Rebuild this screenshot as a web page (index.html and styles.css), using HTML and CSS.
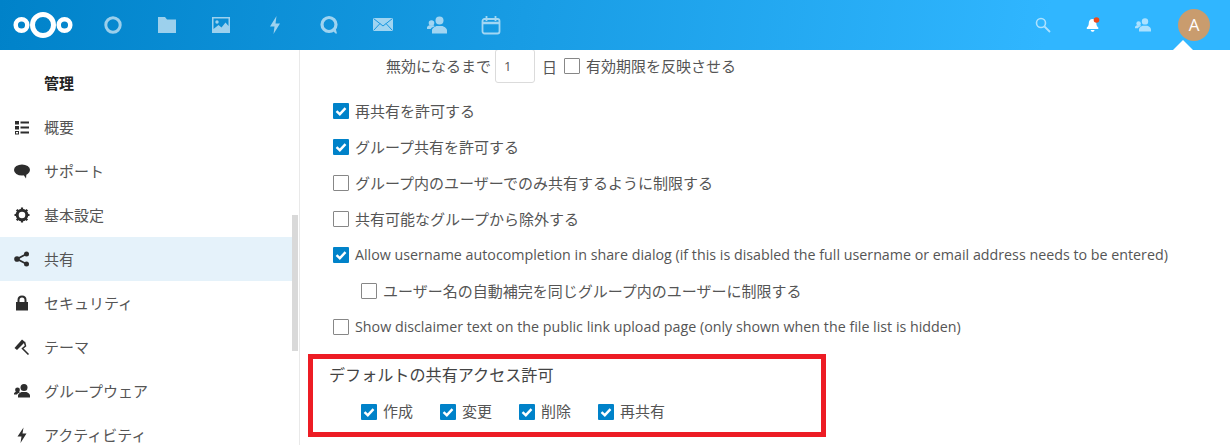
FILE: index.html
```html
<!DOCTYPE html>
<html lang="ja">
<head>
  <meta charset="UTF-8">
  <title>管理 - 共有</title>
  <link rel="stylesheet" href="styles.css">
</head>
<body>

  <svg class="defs" width="0" height="0">
    <symbol id="check" viewBox="0 0 16 16">
      <path d="M3.5 8.200 L6.800 11.200 L12.500 5.200" fill="none" stroke="#fff" stroke-width="2.400"/>
    </symbol>
  </svg>

  <header class="topbar">
    <svg class="logo" width="60" height="28" viewBox="0 0 60 28">
      <circle cx="30" cy="14" r="10.500" fill="none" stroke="#fff" stroke-width="5"/>
      <circle cx="8.500" cy="14" r="5.800" fill="none" stroke="#fff" stroke-width="4.500"/>
      <circle cx="51.500" cy="14" r="5.800" fill="none" stroke="#fff" stroke-width="4.500"/>
    </svg>
    <nav class="apps">
      <svg width="20" height="20" viewBox="0 0 20 20"><circle cx="10" cy="10" r="7.200" fill="none" stroke="#fff" stroke-width="3"/></svg>
      <svg width="20" height="20" viewBox="0 0 20 20"><path d="M1 2h7l2 2.500h9V18H1z" fill="#fff"/></svg>
      <svg width="20" height="20" viewBox="0 0 20 20"><path fill-rule="evenodd" d="M1 2h18v16H1zM2.500 3.500v10.500l5-4 3 2.500 4-5 3 3.500V3.500z" fill="#fff"/><circle cx="6" cy="7" r="1.700" fill="#fff"/></svg>
      <svg width="20" height="20" viewBox="0 0 20 20"><path d="M11.500 1 L5 11.500h4.500L8.500 19l6.500-10.500h-4.500z" fill="#fff"/></svg>
      <svg width="20" height="20" viewBox="0 0 20 20"><circle cx="10" cy="9.500" r="7" fill="none" stroke="#fff" stroke-width="3.200"/><path d="M13 15l3.500 3.500h1.500L16.500 13z" fill="#fff"/></svg>
      <svg width="20" height="20" viewBox="0 0 20 20"><path d="M0 3h20v13H0z" fill="#fff"/><path d="M0.500 3.500L10 11l9.500-7.500M0.500 15.500L7 8.500M19.500 15.500L13 8.500" fill="none" stroke="#1a97e3" stroke-width="1"/></svg>
      <svg width="20" height="20" viewBox="0 0 20 20"><circle cx="12.500" cy="5.500" r="4" fill="#fff"/><circle cx="4.500" cy="8" r="2.800" fill="#fff"/><path d="M5 18.500v-3c0-2.500 3-3.800 4.500-4.500h6c1.500.7 4.500 2 4.500 4.500v3zM0 14v-1.500c0-1.200 1.700-2 2.500-2.300h4c.5.3 1 .6 1.300 1C5.500 12 4 13 3.700 14z" fill="#fff"/></svg>
      <svg width="20" height="20" viewBox="0 0 20 20"><rect x="1.500" y="4" width="17" height="14.500" rx="2" fill="none" stroke="#fff" stroke-width="1.800"/><path d="M1.500 8h17" stroke="#fff" stroke-width="2.500"/><path d="M5.500 1v5M14.500 1v5" stroke="#fff" stroke-width="1.800"/></svg>
    </nav>
    <div class="tools">
      <svg class="tool" width="16" height="16" viewBox="0 0 16 16"><circle cx="6" cy="6" r="4.500" fill="none" stroke="#fff" stroke-width="1.600"/><path d="M9.500 9.500L15 15" stroke="#fff" stroke-width="1.800"/></svg>
      <svg class="bell" width="14" height="16" viewBox="0 0 14 16"><path d="M6.500 2c-2.500 0-3.700 2-3.700 4 0 2.500-.8 3.500-2 4.500V12h11.500v-1.500c-1.200-1-2-2-2-4.500s-1.300-4-3.800-4z" fill="#fff"/><path d="M4.700 13h3.800c0 1-1 1.800-1.900 1.800S4.700 14 4.700 13z" fill="#fff"/><circle cx="10.500" cy="3" r="2.800" fill="#ee4a1c"/></svg>
      <svg class="tool" width="16" height="16" viewBox="0 0 20 20"><circle cx="12.500" cy="5.500" r="4" fill="#fff"/><circle cx="4.500" cy="8" r="2.800" fill="#fff"/><path d="M5 18v-2.500c0-2.500 3-3.800 4.500-4.500h6c1.500.7 4.500 2 4.500 4.500V18zM0 14v-1.500c0-1.200 1.700-2 2.500-2.300h4c.5.3 1 .6 1.300 1C5.500 12 4 13 3.700 14z" fill="#fff"/></svg>
      <div class="avatar">A</div>
    </div>
    <span class="menu-tip"></span>
  </header>

  <div class="page">
    <aside class="sidebar">
      <div class="side-list">
        <div class="side-title">管理</div>
        <a class="side-item">
          <svg width="16" height="16" viewBox="0 0 16 16"><path d="M1 2h4v3.500H1zM1 7h4v3.500H1zM6.500 2.500H15v2H6.500zM6.500 7.500H15v2H6.500zM6.500 12.500H15v2H6.500z" fill="#2d2d2d"/><rect x="1.500" y="12.500" width="3" height="2.500" fill="none" stroke="#2d2d2d"/></svg>
          <span>概要</span>
        </a>
        <a class="side-item">
          <svg width="16" height="16" viewBox="0 0 16 16"><ellipse cx="8" cy="7" rx="8" ry="5.500" fill="#2d2d2d"/><path d="M9 11l3 4.500.5-5.500z" fill="#2d2d2d"/></svg>
          <span>サポート</span>
        </a>
        <a class="side-item">
          <svg width="16" height="16" viewBox="0 0 16 16"><circle cx="8" cy="8" r="4.800" fill="none" stroke="#2d2d2d" stroke-width="3"/><path d="M8 0.500v15M.5 8h15M2.700 2.700l10.600 10.600M13.300 2.700L2.700 13.300" stroke="#2d2d2d" stroke-width="2.200" stroke-dasharray="3 9 3"/></svg>
          <span>基本設定</span>
        </a>
        <a class="side-item active">
          <svg width="16" height="16" viewBox="0 0 16 16"><circle cx="3" cy="8" r="2.800" fill="#2d2d2d"/><circle cx="12.500" cy="3" r="2.500" fill="#2d2d2d"/><circle cx="12.500" cy="13" r="2.500" fill="#2d2d2d"/><path d="M12.500 3L3 8l9.500 5" fill="none" stroke="#2d2d2d" stroke-width="1.800"/></svg>
          <span>共有</span>
        </a>
        <a class="side-item">
          <svg width="16" height="16" viewBox="0 0 16 16"><path d="M2 7h12v8.500H2z" fill="#2d2d2d"/><path d="M4.500 7.500V5c0-2 1.500-3.500 3.500-3.500s3.500 1.500 3.500 3.500v2.500" fill="none" stroke="#2d2d2d" stroke-width="2"/></svg>
          <span>セキュリティ</span>
        </a>
        <a class="side-item">
          <svg width="16" height="16" viewBox="0 0 16 16"><path d="M0.500 9L8 0.500l3 2.500L3 11z" fill="#2d2d2d"/><path d="M10.500 3l1 4-3 2.500 6 6" fill="none" stroke="#2d2d2d" stroke-width="1.500"/></svg>
          <span>テーマ</span>
        </a>
        <a class="side-item">
          <svg width="16" height="16" viewBox="0 0 16 16"><circle cx="10" cy="4.500" r="3.500" fill="#2d2d2d"/><circle cx="3.500" cy="7" r="2.400" fill="#2d2d2d"/><path d="M4 14.500v-2c0-2 2.500-3 3.500-3.500h5c1 .5 3.500 1.500 3.500 3.500v2zM0 11.500v-1c0-1 1.300-1.500 2-1.800h3c.3.200.6.400.9.700C4.200 10 3.200 10.700 3 11.500z" fill="#2d2d2d"/></svg>
          <span>グループウェア</span>
        </a>
        <a class="side-item">
          <svg width="16" height="16" viewBox="0 0 16 16"><path d="M9.500 0.500L3.500 9.500h4l-1 6.500 6-9.500h-4z" fill="#2d2d2d"/></svg>
          <span>アクティビティ</span>
        </a>
      </div>
      <div class="scroll-track"><div class="scroll-thumb"></div></div>
    </aside>

    <main class="content">
      <div class="row expire">
        <span class="txt">無効になるまで</span>
        <input class="days" type="text" value="1">
        <span class="txt day-unit">日</span>
        <span class="box"></span>
        <span class="txt">有効期限を反映させる</span>
      </div>

      <div class="row"><svg class="box on"><use href="#check"/></svg><span class="txt">再共有を許可する</span></div>
      <div class="row"><svg class="box on"><use href="#check"/></svg><span class="txt">グループ共有を許可する</span></div>
      <div class="row"><span class="box"></span><span class="txt">グループ内のユーザーでのみ共有するように制限する</span></div>
      <div class="row"><span class="box"></span><span class="txt">共有可能なグループから除外する</span></div>
      <div class="row"><svg class="box on"><use href="#check"/></svg><span class="txt latin">Allow username autocompletion in share dialog (if this is disabled the full username or email address needs to be entered)</span></div>
      <div class="row sub"><span class="box"></span><span class="txt">ユーザー名の自動補完を同じグループ内のユーザーに制限する</span></div>
      <div class="row"><span class="box"></span><span class="txt latin">Show disclaimer text on the public link upload page (only shown when the file list is hidden)</span></div>

      <section class="perm-box">
        <h3 class="perm-title">デフォルトの共有アクセス許可</h3>
        <div class="perm-list">
          <span class="perm"><svg class="box on"><use href="#check"/></svg><span class="txt">作成</span></span>
          <span class="perm"><svg class="box on"><use href="#check"/></svg><span class="txt">変更</span></span>
          <span class="perm"><svg class="box on"><use href="#check"/></svg><span class="txt">削除</span></span>
          <span class="perm"><svg class="box on"><use href="#check"/></svg><span class="txt">再共有</span></span>
        </div>
      </section>
    </main>
  </div>

</body>
</html>
```

FILE: styles.css
```css
* {
  box-sizing: border-box;
}

html, body {
  margin: 0;
  height: 445px;
  overflow: hidden;
}

body {
  font-family: "Open Sans", "Noto Sans CJK JP", "Liberation Sans", sans-serif;
  font-size: 15px;
  color: #555;
  background-color: #fff;
}

.defs {
  position: absolute;
}

/* top bar */
.topbar {
  position: relative;
  display: flex;
  align-items: center;
  height: 50px;
  padding-left: 13px;
  background: linear-gradient(100deg, #0082c9 0%, #30b6ff 85%);
}

.apps {
  display: flex;
  gap: 34px;
  margin-left: 30px;
  opacity: 0.6;
}

.tools {
  display: flex;
  align-items: center;
  margin-left: auto;
  margin-right: 20px;
}

.tool {
  opacity: 0.6;
}

.bell {
  margin: 0 35px 0 35px;
}

.avatar {
  width: 32px;
  height: 32px;
  margin-left: 27px;
  border-radius: 50%;
  background-color: #c99c6e;
  color: #fff;
  font-size: 17px;
  line-height: 32px;
  text-align: center;
}

.menu-tip {
  position: absolute;
  right: 37px;
  bottom: 0;
  border: 10px solid transparent;
  border-top: 0;
  border-bottom-color: #fff;
}

/* sidebar */
.page {
  display: flex;
  height: 395px;
}

.sidebar {
  display: flex;
  flex: 0 0 300px;
  height: 100%;
  border-right: 1px solid #e9e9e9;
}

.side-list {
  flex: 0 0 292px;
  padding-top: 11px;
}

.side-title {
  height: 44px;
  padding-left: 44px;
  font-weight: bold;
  line-height: 44px;
  color: #222;
}

.side-item {
  display: flex;
  align-items: center;
  gap: 14px;
  height: 44px;
  padding-left: 14px;
}

.side-item svg {
  flex: none;
  width: 16px;
}

.side-item span {
  margin-bottom: 1px;
}

.active {
  background-color: #e5f2fa;
}

.scroll-track {
  flex: 0 0 6px;
  padding-top: 165px;
}

.scroll-thumb {
  height: 136px;
  background-color: #d9d9d9;
}

/* settings */
.content {
  flex: 1;
  min-width: 0;
  padding: 0 0 0 8px;
}

.row {
  display: flex;
  align-items: center;
  gap: 6px;
  height: 36px;
  padding-left: 25px;
  white-space: nowrap;
}

.txt {
  margin-bottom: 1px;
}

.latin {
  font-size: 14.27px;
}

.expire {
  height: 32px;
  margin-bottom: 11px;
  padding-left: 78px;
  gap: 0;
}

.days {
  width: 40px;
  height: 34px;
  margin: 0 0 0 4px;
  padding: 0 8px;
  border: 1px solid #dbdbdb;
  border-radius: 3px;
  font: inherit;
  font-size: 13px;
  color: #555;
}

.day-unit {
  margin: 0 7px;
}

.expire .box {
  margin-right: 6px;
}

.sub {
  padding-left: 53px;
}

.box {
  display: inline-block;
  flex: none;
  width: 16px;
  height: 16px;
  border: 1px solid #878787;
  border-radius: 1px;
  background-color: #fff;
}

.box.on {
  border: 0;
  background-color: #0082c9;
}

/* red box */
.perm-box {
  width: 518px;
  height: 83px;
  margin-top: 9px;
  padding: 5px 0 0 16px;
  border: 5px solid #ed1c24;
}

.perm-title {
  margin: 0;
  font-size: 16.1px;
  font-weight: normal;
  line-height: 22px;
  color: #444;
}

.perm-list {
  display: flex;
  gap: 27px;
  margin-top: 14px;
  padding-left: 32px;
}

.perm {
  display: flex;
  align-items: center;
  gap: 6px;
  line-height: 22px;
  white-space: nowrap;
}
```
